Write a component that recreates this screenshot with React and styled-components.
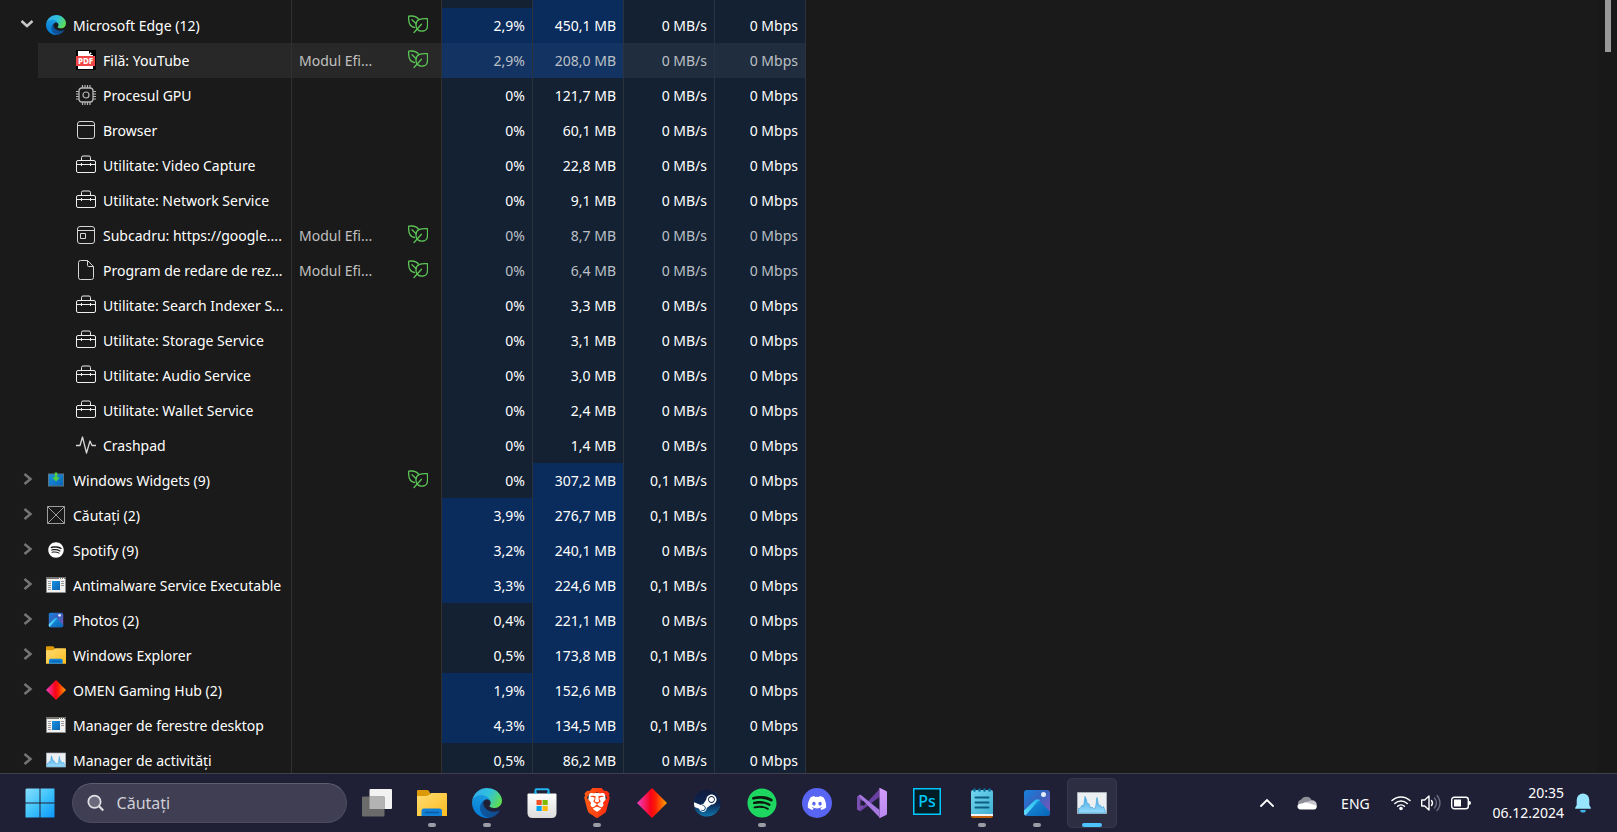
import React from "react";
import styled, { createGlobalStyle } from "styled-components";
import { FaSpotify, FaDiscord, FaSteam } from "react-icons/fa";
import { SiBrave } from "react-icons/si";

const GlobalStyle = createGlobalStyle`
  * { box-sizing: border-box; }
  body {
    margin: 0;
    background: #1a1a1a;
    color: #fff;
    font-family: "Segoe UI", "Noto Sans", "Open Sans", sans-serif;
    font-size: 14px;
    overflow: hidden;
  }
  button, input { font: inherit; color: inherit; }
`;

/* ---------- layout ---------- */

const Desktop = styled.div`
  height: 100vh;
  display: flex;
  flex-direction: column;
`;

const ProcessPane = styled.main`
  flex: 1;
  min-height: 0;
  display: flex;
  justify-content: space-between;
  align-items: flex-start;
  overflow: hidden;
`;

const ScrollTrack = styled.div`
  align-self: stretch;
  width: 20px;
  padding: 0 6px 0 8px;
  background: #181818;
`;

const ScrollThumb = styled.div`
  height: 52px;
  background: #999;
`;

/* ---------- process table ---------- */

const ProcessTable = styled.table`
  width: 806px;
  table-layout: fixed;
  border-collapse: separate;
  border-spacing: 0;
  line-height: 20px;
`;

const Column = styled.col`
  width: ${(p) => p.$width}px;
`;

const cellColor = { plain: "#1a1a1a", low: "#132133", high: "#0a2c5c" };
const hoverColor = { plain: "#282828", low: "#1f2d3e", high: "#133463" };

const Cell = styled.td`
  height: ${(p) => (p.$sliver ? 8 : 35)}px;
  padding: 0;
  border-right: 1px solid ${(p) => (p.$heat ? "#2a333d" : "#303030")};
  background: ${(p) => (p.$hover ? hoverColor : cellColor)[p.$heat || "plain"]};
  white-space: nowrap;
`;

const NameCell = styled(Cell).attrs({ as: "th", scope: "row" })`
  padding-left: ${(p) => (p.$child ? 38 : 0)}px;
  background: #1a1a1a;
  font-weight: 400;
  text-align: left;
`;

const NameBox = styled.div`
  height: 35px;
  padding-left: ${(p) => (p.$child ? 38 : 16)}px;
  display: flex;
  align-items: center;
  background: ${(p) => (p.$hover ? "#282828" : "transparent")};

  > svg {
    width: 20px;
    height: 20px;
    margin: 0 7px 1px 0;
    flex: none;
  }
`;

const Expander = styled.button`
  width: 22px;
  height: 24px;
  margin-right: 8px;
  padding: 0 0 3px;
  border: 0;
  background: none;
  color: ${(p) => (p.$open ? "#c8c8c8" : "#757575")};
  display: grid;
  place-items: center;
`;

const ExpanderSpace = styled.span`
  width: 30px;
`;

const StatusBox = styled.div`
  display: flex;
  align-items: center;
  justify-content: space-between;
  padding: 0 13px 0 7px;
  color: #c0c0c0;

  > svg { margin-bottom: 1px; }
`;

const ValueCell = styled(Cell)`
  padding-right: 7px;
  text-align: right;
  color: ${(p) => (p.$dim ? "#bcc0c6" : "#fff")};
`;

/* ---------- taskbar ---------- */

const Taskbar = styled.footer`
  height: 59px;
  flex: none;
  padding: 0 26px 0 15px;
  border-top: 1px solid #40404c;
  background: #1f1f35;
  display: flex;
  align-items: center;
  justify-content: space-between;
`;

const TaskGroup = styled.div`
  display: flex;
  align-items: center;
  gap: 5px;
`;

const TaskButton = styled.button`
  position: relative;
  width: 50px;
  height: 50px;
  padding: 0;
  border: 1px solid ${(p) => (p.$active ? "#38384d" : "transparent")};
  border-radius: 5px;
  background: ${(p) => (p.$active ? "#2e2e43" : "none")};
  display: grid;
  place-items: center;
`;

const Indicator = styled.span`
  position: absolute;
  bottom: 0;
  left: 50%;
  transform: translateX(-50%);
  width: ${(p) => (p.$active ? 20 : 8)}px;
  height: 4px;
  border-radius: 2px;
  background: ${(p) => (p.$active ? "#4cc2ff" : "#9c9ca6")};
`;

const SearchBox = styled.label`
  width: 275px;
  height: 40px;
  margin-left: 2px;
  padding: 0 14px;
  border: 1px solid #4c4c5e;
  border-top-color: #5f5f70;
  border-radius: 20px;
  background: #3f3e53;
  display: flex;
  align-items: center;
  gap: 12px;
  font-size: 16px;
`;

const SearchInput = styled.input`
  width: 100%;
  padding: 0;
  border: 0;
  outline: 0;
  background: none;
  &::placeholder { color: #cfcfd6; opacity: 1; }
`;

const Tray = styled.div`
  display: flex;
  align-items: center;
`;

const TrayButton = styled.button`
  width: ${(p) => p.$width}px;
  height: 40px;
  padding: 0;
  border: 0;
  background: none;
  display: flex;
  align-items: center;
  justify-content: center;
  gap: 10px;
`;

const Clock = styled.time`
  padding: 0 11px 0 13px;
  text-align: right;
  line-height: 20px;
`;

/* ---------- drawings ---------- */

const Gradients = () => (
  <svg width="0" height="0" style={{ position: "absolute" }} aria-hidden="true">
    <defs>
      <linearGradient id="edgeDark" x1="0" x2="1"><stop stopColor="#0c59a4" /><stop offset="1" stopColor="#114a8b" /></linearGradient>
      <linearGradient id="edgeMid" x1=".6" y1="0" x2=".2" y2="1"><stop stopColor="#1b9de2" /><stop offset=".5" stopColor="#0f8ada" /><stop offset="1" stopColor="#0078d4" /></linearGradient>
      <linearGradient id="edgeTop" x1="0" y1=".2" x2="1" y2=".6"><stop stopColor="#35a9ea" /><stop offset=".5" stopColor="#2fc2df" /><stop offset="1" stopColor="#5fdc50" /></linearGradient>
      <linearGradient id="folder" x1="0" y1="0" x2="1" y2="1"><stop stopColor="#ffdc74" /><stop offset="1" stopColor="#fcbc1e" /></linearGradient>
      <linearGradient id="blue" x1="0" y1="0" x2="1" y2="1"><stop stopColor="#1a93e0" /><stop offset="1" stopColor="#0763b5" /></linearGradient>
      <linearGradient id="omen"><stop stopColor="#ee3fc8" /><stop offset=".45" stopColor="#f9041c" /><stop offset=".6" stopColor="#fb1a05" /><stop offset="1" stopColor="#ffa400" /></linearGradient>
      <linearGradient id="photoSky" x1="0" y1="0" x2="1" y2="1"><stop stopColor="#1482dc" /><stop offset=".45" stopColor="#3763c0" /><stop offset="1" stopColor="#8b54b8" /></linearGradient>
      <linearGradient id="photoHill" x1="0" y1="1" x2="1" y2="0"><stop stopColor="#5fe0fb" /><stop offset="1" stopColor="#22b8f0" /></linearGradient>
      <linearGradient id="steam" x1="0" y1="0" x2="0" y2="1"><stop stopColor="#101a3c" /><stop offset=".5" stopColor="#0c2450" /><stop offset="1" stopColor="#0f75ad" /></linearGradient>
      <linearGradient id="winLogo" gradientUnits="userSpaceOnUse" x1="0" y1="0" x2="30" y2="30"><stop stopColor="#8be0fc" /><stop offset=".5" stopColor="#3fc3fb" /><stop offset="1" stopColor="#0a94f8" /></linearGradient>
      <linearGradient id="bag" x1="0" y1="0" x2="0" y2="1"><stop stopColor="#ffffff" /><stop offset="1" stopColor="#dcdcdc" /></linearGradient>
      <linearGradient id="note" x1="0" y1="0" x2="1" y2="1"><stop stopColor="#74d6ee" /><stop offset="1" stopColor="#3fb0d2" /></linearGradient>
      <linearGradient id="chartFill" x1="0" y1="0" x2="0" y2="1"><stop stopColor="#3fa5e2" /><stop offset="1" stopColor="#9bdcfd" /></linearGradient>
      <linearGradient id="vs" x1="0" y1="0" x2="0" y2="1"><stop stopColor="#d59dff" /><stop offset="1" stopColor="#b888f0" /></linearGradient>
      <linearGradient id="brave" x1="0" y1="0" x2="1" y2="0"><stop stopColor="#ff5a14" /><stop offset="1" stopColor="#ff2a10" /></linearGradient>
    </defs>
  </svg>
);

const EdgeIcon = ({ size = 20 }) => (
  <svg width={size} height={size} viewBox="0 0 256 256">
    <g transform="translate(-4.63 -4.92)">
      <path fill="url(#edgeDark)" d="M235.68 195.46a93.73 93.73 0 0 1-10.54 4.71 101.87 101.87 0 0 1-35.9 6.46c-47.32 0-88.54-32.55-88.54-74.32A31.48 31.48 0 0 1 117.13 105c-42.8 1.8-53.8 46.4-53.8 72.53 0 73.88 68.09 81.37 82.76 81.37 7.91 0 19.84-2.3 27-4.56l1.31-.44a128.34 128.34 0 0 0 66.6-52.8 4 4 0 0 0-5.32-5.64z" />
      <path fill="url(#edgeMid)" d="M110.34 246.34A79.2 79.2 0 0 1 87.6 225a80.72 80.72 0 0 1 29.53-120c3.12-1.47 8.45-4.13 15.54-4a32.35 32.35 0 0 1 25.69 13 31.88 31.88 0 0 1 6.36 18.66c0-.21 24.46-79.6-80-79.6-43.9 0-80 41.66-80 78.21a130.15 130.15 0 0 0 12.11 56 128 128 0 0 0 156.38 67.11 75.55 75.55 0 0 1-62.78-8z" />
      <path fill="url(#edgeTop)" d="M156.94 153.78c-.81 1.05-3.3 2.5-3.3 5.66 0 2.61 1.7 5.12 4.72 7.23 14.38 10 41.49 8.68 41.56 8.68a59.56 59.56 0 0 0 30.27-8.35 61.38 61.38 0 0 0 30.43-52.88c.26-22.41-8-37.31-11.34-43.91C228.09 28.76 182.35 5 132.61 5a128 128 0 0 0-128 126.2c.48-36.54 36.8-66.05 80-66.05 3.5 0 23.46.34 42 10.07 16.34 8.58 24.9 18.94 30.85 29.21 6.18 10.67 7.28 24.15 7.28 29.52s-2.74 13.33-7.8 19.83z" />
    </g>
  </svg>
);

const PdfIcon = () => (
  <svg viewBox="0 0 20 20">
    <path fill="#000" d="M0 0h20v20H0z" />
    <path fill="#fff" d="M2 1h11l4 4v14H2z" />
    <path fill="#000" d="M13 0h5v5h-3l-2-2z" />
    <path fill="#fff" d="M14 2l2 2h-2z" />
    <rect y="6" width="19" height="10" fill="#f14646" />
    <text x="9.5" y="14" textAnchor="middle" fontSize="8" fontWeight="800" fill="#fff">PDF</text>
  </svg>
);

const outline = { fill: "none", stroke: "#d6d6d6", strokeWidth: 1 };

const GpuIcon = () => (
  <svg viewBox="0 0 20 20" {...outline} stroke="#b5b5b5">
    <rect x="3" y="3" width="14" height="14" rx="3" strokeWidth="1.3" />
    <circle cx="10" cy="10" r="3" strokeWidth="1.2" />
    <path strokeWidth="1.2" d="M6.5 0v3M9 0v3M11.5 0v3M14 0v3M6.5 17v3M9 17v3M11.5 17v3M14 17v3M0 6.5h3M0 9h3M0 11.5h3M0 14h3M17 6.5h3M17 9h3M17 11.5h3M17 14h3" />
  </svg>
);

const BrowserIcon = () => (
  <svg viewBox="0 0 20 20" {...outline}>
    <rect x="1.5" y="1.5" width="17" height="17" rx="2.5" />
    <path d="M1.5 5.5h17" />
  </svg>
);

const SubframeIcon = () => (
  <svg viewBox="0 0 20 20" {...outline}>
    <rect x="1.5" y="1.5" width="17" height="17" rx="2.5" />
    <path d="M1.5 5.5h17M4.5 8.5h5v5h-5z" />
  </svg>
);

const ToolboxIcon = () => (
  <svg viewBox="0 0 20 20" {...outline} stroke="#efefef">
    <rect x=".5" y="5.5" width="19" height="12" rx="1.5" />
    <path d="M5.5 5.5v-3A1.5 1.5 0 0 1 7 1h6a1.5 1.5 0 0 1 1.5 1.5v3M.5 9.5h19M5.5 8v3M14.5 8v3" />
  </svg>
);

const PageIcon = () => (
  <svg viewBox="0 0 20 20" {...outline}>
    <path d="M4.5.5h7l6 6v11a2 2 0 0 1-2 2h-11a2 2 0 0 1-2-2v-15a2 2 0 0 1 2-2zM11.5.5v5a1 1 0 0 0 1 1h5" />
  </svg>
);

const CrashIcon = () => (
  <svg viewBox="0 0 20 20" {...outline} strokeWidth="1.3" strokeLinejoin="round">
    <path d="M0 10.5h4L6.500 2l4 16L14 6l2 4.500h4" />
  </svg>
);

const WidgetsIcon = () => (
  <svg viewBox="0 0 20 20">
    <rect x="2.5" y="4" width="15" height="12" fill="url(#blue)" stroke="#5b7483" />
    <path fill="#4fd13f" d="M8.7 2.500h2.600V7.500H14l-4 4-4-4h2.700z" />
  </svg>
);

const CrossBoxIcon = () => (
  <svg viewBox="0 0 20 20" {...outline} stroke="#9d9d9d">
    <path d="M1.5 1.5h17v17h-17zM1.5 1.5l17 17M18.5 1.5l-17 17" />
  </svg>
);

const SpotifyMono = () => (
  <svg viewBox="0 0 20 20">
    <circle cx="10" cy="10" r="8" fill="#1a1a1a" />
    <FaSpotify x="2" y="2" size={16} fill="#fff" />
  </svg>
);

const WindowIcon = () => (
  <svg viewBox="0 0 20 20">
    <path fill="#f2f2f2" stroke="#8c8c8c" d="M.5 2.5h19v15H.5z" />
    <path fill="#77746f" d="M0 2h20v2H0z" />
    <path fill="#fff" d="M13 3h1v1h-1zM15 3h1v1h-1zM17 3h1v1h-1z" />
    <rect x="6" y="6" width="8" height="9" fill="url(#blue)" />
    <path stroke="#999" d="M2 6.5h3M2 8.5h3M2 10.5h3M2 12.5h3M2 14.5h3M15 6.5h3M15 8.5h3M15 10.5h3" />
  </svg>
);

const PhotosIcon = ({ size = 20, inset = 5 }) => (
  <svg width={size} height={size} viewBox={`${-inset} ${-inset} ${26 + inset * 2} ${26 + inset * 2}`}>
    <rect width="26" height="26" rx="3" fill="url(#photoSky)" />
    <circle cx="19.5" cy="4.5" r="2.5" fill="#e4ecfa" />
    <path fill="url(#blue)" d="M10 13l1.500-2q2-2.200 4 0L26 21.500V23q0 3-3 3H3z" />
    <path fill="url(#photoHill)" d="M0 20.500l10.500-10q3-2.500 6 0-1.500-.2-3 1.200L1.500 25.600Q0 25 0 23z" />
  </svg>
);

const FolderIcon = ({ size = 20 }) => (
  <svg width={size} height={size} viewBox="0 0 30 30">
    <path fill="#dd9a08" d="M0 3q0-1 1-1h9q1 0 2 1l1 2v4H0z" />
    <path fill="url(#folder)" d="M0 8h9q2 0 4-2l1-1h15q1 0 1 1v22H0z" />
    <path fill="#1180d6" d="M4.5 28v-5q0-2.500 2.500-2.500h15.500q2.500 0 2.500 2.500v5z" />
    <path stroke="#0a5aa6" strokeWidth="1.5" strokeLinecap="round" d="M8.5 24.500h13" />
  </svg>
);

const OmenIcon = ({ size = 20 }) => (
  <svg width={size} height={size} viewBox="0 0 30 30">
    <path fill="url(#omen)" d="M15 0l15 15-15 15L0 15z" />
  </svg>
);

const ChartIcon = ({ size = 20 }) => (
  <svg width={size} height={size} viewBox="0 0 30 30">
    <path fill="#eceff1" stroke="#aab1b8" d="M.5 4.5h29v21H.5z" />
    <path fill="url(#chartFill)" stroke="#4fa9e0" strokeWidth=".8" strokeLinejoin="round" d="M1.500 25v-4.500l2-.5 1.500-3 1.500 2L8 8.500l1.500 3.500.5 3 2 1 1.500 4 1.500-1 1.500 1.500 2-.5L20 9.500 21.500 17l2 .5 1.500 2.500 1.500-1.500 1.500 4 .5 2.500z" />
  </svg>
);

const LeavesIcon = () => (
  <svg width="20" height="20" viewBox="0 0 20 20" fill="none" stroke="#5cc455" strokeWidth="1.3" strokeLinecap="round" strokeLinejoin="round" aria-label="Modul Eficiență" role="img">
    <path d="M6.500 12.500C2 12 .2 8 .7 1.200c4.300-.6 7.800-.2 9.800 3" />
    <path d="M19.400 3.700c-6-.5-11 .5-11.400 5.300-.2 2.500.5 4.500 1.500 5.500 2.500 2.500 9.500 2.500 9.900-3 .2-2.500.2-5 0-7.800z" />
    <path d="M4 4.700l4.200 4M13.500 9.300L6 17.500" />
  </svg>
);

const Chevron = ({ open }) => (
  <svg width="14" height="14" viewBox="0 0 14 14" fill="none" stroke="currentColor" strokeWidth="2.5">
    <path d={open ? "M1.5 4l5.5 5 5.5-5" : "M4.5 2l6 5-6 5"} />
  </svg>
);

const StartIcon = () => (
  <svg width="30" height="30" viewBox="0 0 30 30">
    <path fill="url(#winLogo)" d="M1.500 .5H14.500v14H.5V1.500zM15.500 .5H29q.5 0 .5.500v13.500h-14zM.5 15.500h14v14H1q-.5 0-.5-.5zM15.500 15.500h14V29q0 .5-.5.500H15.500z" />
  </svg>
);

const SearchIcon = () => (
  <svg width="20" height="20" viewBox="0 0 20 20" fill="#6a6a7b" stroke="#dfdfe4" strokeWidth="2">
    <circle cx="8.5" cy="8.5" r="7" />
    <path d="M13.5 13.5l5 5" strokeWidth="2.5" />
  </svg>
);

const TaskViewIcon = () => (
  <svg width="30" height="30" viewBox="0 0 30 30">
    <rect x="7.5" y="1" width="22.5" height="20" rx="1" fill="#f2f2f2" />
    <rect y="8.5" width="22.5" height="20" rx="1" fill="#6b6b6b" />
    <path fill="#b3b3b3" d="M7.5 8.5h15V21h-15z" />
  </svg>
);

const StoreIcon = () => (
  <svg width="30" height="30" viewBox="0 0 30 30">
    <path fill="none" stroke="#21b3f0" strokeWidth="2" d="M8.500 7V2q0-.7.700-.7h11.600q.7 0 .7.700v5" />
    <path fill="url(#bag)" d="M.5 6.500q0-1 1-1h27q1 0 1 1V25q0 5-5 5h-19q-5 0-5-5z" />
    <path fill="#21b3f0" d="M7.500 4h2v2h-2zM20.500 4h2v2h-2z" />
    <path fill="#f25022" d="M9.500 12h5.200v5H9.500z" />
    <path fill="#7fba00" d="M15.500 12h5.200v5h-5.200z" />
    <path fill="#00a4ef" d="M9.500 18h5.200v5H9.500z" />
    <path fill="#ffb900" d="M15.500 18h5.200v5h-5.200z" />
  </svg>
);

const BraveIcon = () => (
  <svg width="30" height="30" viewBox="0 0 30 30">
    <path fill="#fff" d="M7 5h16l1 10-9 12-9-12z" />
    <SiBrave x="0" y="0" size={30} fill="url(#brave)" />
  </svg>
);

const SteamIcon = () => (
  <svg width="30" height="30" viewBox="0 0 30 30">
    <circle cx="15" cy="15" r="13" fill="#fff" />
    <FaSteam x="1" y="1" size={28} fill="url(#steam)" />
  </svg>
);

const SpotifyIcon = () => (
  <svg width="30" height="30" viewBox="0 0 30 30">
    <circle cx="15" cy="15" r="13" fill="#0c1a12" />
    <FaSpotify x="0" y="0" size={30} fill="#1ed760" />
  </svg>
);

const DiscordIcon = () => (
  <svg width="30" height="30" viewBox="0 0 30 30">
    <circle cx="15" cy="15" r="15" fill="#5865f2" />
    <FaDiscord x="5" y="5" size={20} fill="#fff" />
  </svg>
);

const VisualStudioIcon = () => (
  <svg width="30" height="30" viewBox="0 0 30 30">
    <path fill="#7a4fb0" d="M0 8.500L2.500 7 8 10.500 3.500 15 8 19.500 2.500 23 0 21.500z" />
    <path fill="#1f1f35" d="M3.500 11.500v7L7 15z" />
    <path fill="#6a3fa2" d="M2 23l20.500-22L22.500 9 4.500 22.500q-1.200 1-2.500.5z" />
    <path fill="#a678e0" d="M2 7q1.500-.6 2.500.4L22.500 22v7.500L2.500 9z" />
    <path fill="url(#vs)" d="M22 .3q.7-.4 1.500 0L29.200 3q.8.500.8 1.300v21.400q0 .8-.8 1.300l-5.700 2.700q-.8.400-1.500 0 .5-.5.500-1.400V1.700q0-.9-.5-1.400z" />
  </svg>
);

const PhotoshopIcon = () => (
  <svg width="30" height="30" viewBox="0 0 30 30">
    <rect x="1.75" y=".75" width="26.5" height="25.5" fill="#001d26" stroke="#00c8ff" strokeWidth="1.5" />
    <text x="15" y="19" textAnchor="middle" fontSize="16" fontWeight="500" fill="#00c8ff">Ps</text>
  </svg>
);

const NotepadIcon = () => (
  <svg width="30" height="30" viewBox="0 0 30 30">
    <path fill="#c2600e" d="M4 25h22v3q0 2-2 2H6q-2 0-2-2z" />
    <path fill="#f4f4f4" d="M4 24h22v4H4z" />
    <path fill="url(#note)" d="M4 4q0-2 2-2h18q2 0 2 2v22H4z" />
    <path stroke="#0d5f82" strokeWidth="2" strokeLinecap="round" d="M8.5 9.5h13M8.5 14.5h13M8.5 19.500h13" />
    <path stroke="#0e6f95" strokeWidth="2.5" strokeLinecap="round" d="M7.5 1.5v1M12.5 1.5v1M17.5 1.5v1M22.5 1.5v1" />
  </svg>
);

const UpIcon = () => (
  <svg width="14" height="8" viewBox="0 0 14 8" fill="none" stroke="#fff" strokeWidth="1.8" strokeLinecap="round"><path d="M1 7l6-6 6 6" /></svg>
);

const CloudIcon = () => (
  <svg width="20" height="14" viewBox="0 0 20 14">
    <path fill="#8f8f9a" d="M3 11A3.900 3.900 0 0 1 4 3.700 6 6 0 0 1 14.800 4.500L10 9z" />
    <path fill="#c6c6cd" d="M8 6.500l6.800-2.300A4.800 4.800 0 0 1 19.800 9l-1.300 2z" />
    <path fill="#fff" d="M3.600 13.500A3.600 3.600 0 0 1 .5 9.500Q2 7 5 7.500l3.500-1.200L19.600 9.500a3 3 0 0 1-2.600 4z" />
  </svg>
);

const WifiIcon = () => (
  <svg width="20" height="16" viewBox="0 0 20 16" fill="none" stroke="#fff" strokeWidth="1.5" strokeLinecap="round">
    <path d="M1 5.500a13 13 0 0 1 18 0M3.800 8.500a9 9 0 0 1 12.400 0M6.600 11.300a5 5 0 0 1 6.800 0" />
    <circle cx="10" cy="13.5" r="1.8" fill="#fff" stroke="none" />
  </svg>
);

const VolumeIcon = () => (
  <svg width="20" height="18" viewBox="0 0 20 18" fill="none" stroke="#fff" strokeWidth="1.4" strokeLinecap="round" strokeLinejoin="round">
    <path d="M.7 6h3L8 2v14l-4.300-4h-3zM10.500 6.500a4 4 0 0 1 0 5" />
    <path stroke="#6a6a7c" d="M13.500 4a7.500 7.500 0 0 1 0 10M16 1.500a11 11 0 0 1 0 15" />
  </svg>
);

const BatteryIcon = () => (
  <svg width="20" height="14" viewBox="0 0 20 14">
    <rect x=".7" y="1.2" width="16.6" height="11.6" rx="2.5" fill="none" stroke="#fff" strokeWidth="1.4" />
    <path fill="#fff" d="M3 3.500h7v7H3zM18 5q2 0 2 2t-2 2z" />
  </svg>
);

const BellIcon = () => (
  <svg width="16" height="20" viewBox="0 0 16 20">
    <path fill="#97e5ff" d="M8 .5a6.300 6.300 0 0 1 6.300 6.300V12l1.500 2.700q.4 1.100-.8 1.100H1q-1.200 0-.8-1.100L1.700 12V6.800A6.300 6.300 0 0 1 8 .5z" />
    <path fill="#3fb4e8" d="M5.200 17h5.600a2.800 2.600 0 0 1-5.600 0z" />
  </svg>
);

/* ---------- data ---------- */

const processes = [
  { name: "Microsoft Edge (12)", icon: EdgeIcon, open: true, eco: true, cpu: "2,9%", mem: "450,1 MB", disk: "0 MB/s", cpuHigh: true, memHigh: true },
  { name: "Filă: YouTube", icon: PdfIcon, child: true, hover: true, status: "Modul Efi...", eco: true, cpu: "2,9%", mem: "208,0 MB", disk: "0 MB/s", cpuHigh: true, memHigh: true },
  { name: "Procesul GPU", icon: GpuIcon, child: true, cpu: "0%", mem: "121,7 MB", disk: "0 MB/s" },
  { name: "Browser", icon: BrowserIcon, child: true, cpu: "0%", mem: "60,1 MB", disk: "0 MB/s" },
  { name: "Utilitate: Video Capture", icon: ToolboxIcon, child: true, cpu: "0%", mem: "22,8 MB", disk: "0 MB/s" },
  { name: "Utilitate: Network Service", icon: ToolboxIcon, child: true, cpu: "0%", mem: "9,1 MB", disk: "0 MB/s" },
  { name: "Subcadru: https://google....", icon: SubframeIcon, child: true, status: "Modul Efi...", eco: true, cpu: "0%", mem: "8,7 MB", disk: "0 MB/s" },
  { name: "Program de redare de rez...", icon: PageIcon, child: true, status: "Modul Efi...", eco: true, cpu: "0%", mem: "6,4 MB", disk: "0 MB/s" },
  { name: "Utilitate: Search Indexer S...", icon: ToolboxIcon, child: true, cpu: "0%", mem: "3,3 MB", disk: "0 MB/s" },
  { name: "Utilitate: Storage Service", icon: ToolboxIcon, child: true, cpu: "0%", mem: "3,1 MB", disk: "0 MB/s" },
  { name: "Utilitate: Audio Service", icon: ToolboxIcon, child: true, cpu: "0%", mem: "3,0 MB", disk: "0 MB/s" },
  { name: "Utilitate: Wallet Service", icon: ToolboxIcon, child: true, cpu: "0%", mem: "2,4 MB", disk: "0 MB/s" },
  { name: "Crashpad", icon: CrashIcon, child: true, cpu: "0%", mem: "1,4 MB", disk: "0 MB/s" },
  { name: "Windows Widgets (9)", icon: WidgetsIcon, eco: true, cpu: "0%", mem: "307,2 MB", disk: "0,1 MB/s", memHigh: true },
  { name: "Căutați (2)", icon: CrossBoxIcon, cpu: "3,9%", mem: "276,7 MB", disk: "0,1 MB/s", cpuHigh: true, memHigh: true },
  { name: "Spotify (9)", icon: SpotifyMono, cpu: "3,2%", mem: "240,1 MB", disk: "0 MB/s", cpuHigh: true, memHigh: true },
  { name: "Antimalware Service Executable", icon: WindowIcon, cpu: "3,3%", mem: "224,6 MB", disk: "0,1 MB/s", cpuHigh: true, memHigh: true },
  { name: "Photos (2)", icon: PhotosIcon, cpu: "0,4%", mem: "221,1 MB", disk: "0 MB/s", memHigh: true },
  { name: "Windows Explorer", icon: FolderIcon, cpu: "0,5%", mem: "173,8 MB", disk: "0,1 MB/s", memHigh: true },
  { name: "OMEN Gaming Hub (2)", icon: OmenIcon, cpu: "1,9%", mem: "152,6 MB", disk: "0 MB/s", cpuHigh: true, memHigh: true },
  { name: "Manager de ferestre desktop", icon: WindowIcon, leaf: true, cpu: "4,3%", mem: "134,5 MB", disk: "0,1 MB/s", cpuHigh: true, memHigh: true },
  { name: "Manager de activități", icon: ChartIcon, cpu: "0,5%", mem: "86,2 MB", disk: "0 MB/s" },
];

const pinned = [
  { name: "Task View", icon: <TaskViewIcon /> },
  { name: "Explorer", icon: <FolderIcon size={30} />, running: true },
  { name: "Microsoft Edge", icon: <EdgeIcon size={30} />, running: true },
  { name: "Microsoft Store", icon: <StoreIcon /> },
  { name: "Brave", icon: <BraveIcon />, running: true },
  { name: "OMEN Gaming Hub", icon: <OmenIcon size={30} /> },
  { name: "Steam", icon: <SteamIcon /> },
  { name: "Spotify", icon: <SpotifyIcon />, running: true },
  { name: "Discord", icon: <DiscordIcon /> },
  { name: "Visual Studio", icon: <VisualStudioIcon /> },
  { name: "Photoshop", icon: <PhotoshopIcon /> },
  { name: "Notepad", icon: <NotepadIcon />, running: true },
  { name: "Photos", icon: <PhotosIcon size={30} inset={2} />, running: true },
  { name: "Manager de activități", icon: <ChartIcon size={30} />, running: true, active: true },
];

const heat = (high) => (high ? "high" : "low");

function ProcessRow({ process: p }) {
  const Icon = p.icon;
  const value = { $hover: p.hover, $dim: Boolean(p.status) };
  return (
    <tr>
      <NameCell $child={p.child}>
        <NameBox $child={p.child} $hover={p.hover}>
          {!p.child && (p.leaf ? <ExpanderSpace /> : (
            <Expander $open={p.open} aria-label={p.name} aria-expanded={Boolean(p.open)}>
              <Chevron open={p.open} />
            </Expander>
          ))}
          <Icon />
          {p.name}
        </NameBox>
      </NameCell>
      <Cell $hover={p.hover}>
        <StatusBox>
          <span>{p.status}</span>
          {p.eco && <LeavesIcon />}
        </StatusBox>
      </Cell>
      <ValueCell {...value} $heat={heat(p.cpuHigh)}>{p.cpu}</ValueCell>
      <ValueCell {...value} $heat={heat(p.memHigh)}>{p.mem}</ValueCell>
      <ValueCell {...value} $heat="low">{p.disk}</ValueCell>
      <ValueCell {...value} $heat="low">0 Mbps</ValueCell>
    </tr>
  );
}

export default function App() {
  return (
    <Desktop>
      <GlobalStyle />
      <Gradients />
      <ProcessPane>
        <ProcessTable>
          <colgroup>
            <Column $width={292} />
            <Column $width={150} />
            <Column $width={91} />
            <Column $width={91} />
            <Column $width={91} />
            <Column $width={91} />
          </colgroup>
          <tbody>
            <tr aria-hidden="true">
              <Cell $sliver />
              <Cell $sliver />
              <Cell $sliver $heat="low" />
              <Cell $sliver $heat="high" />
              <Cell $sliver $heat="low" />
              <Cell $sliver $heat="low" />
            </tr>
            {processes.map((p) => <ProcessRow key={p.name} process={p} />)}
          </tbody>
        </ProcessTable>
        <ScrollTrack><ScrollThumb /></ScrollTrack>
      </ProcessPane>

      <Taskbar>
        <TaskGroup>
          <TaskButton aria-label="Start"><StartIcon /></TaskButton>
          <SearchBox>
            <SearchIcon />
            <SearchInput type="text" placeholder="Căutați" aria-label="Căutați" />
          </SearchBox>
          {pinned.map((app) => (
            <TaskButton key={app.name} aria-label={app.name} $active={app.active}>
              {app.icon}
              {app.running && <Indicator $active={app.active} />}
            </TaskButton>
          ))}
        </TaskGroup>
        <Tray>
          <TrayButton $width={40} aria-label="Pictograme ascunse"><UpIcon /></TrayButton>
          <TrayButton $width={40} aria-label="OneDrive"><CloudIcon /></TrayButton>
          <TrayButton $width={56}>ENG</TrayButton>
          <TrayButton $width={96} aria-label="Setări rapide"><WifiIcon /><VolumeIcon /><BatteryIcon /></TrayButton>
          <Clock dateTime="2024-12-06T20:35">20:35<br />06.12.2024</Clock>
          <TrayButton $width={16} aria-label="Notificări"><BellIcon /></TrayButton>
        </Tray>
      </Taskbar>
    </Desktop>
  );
}
